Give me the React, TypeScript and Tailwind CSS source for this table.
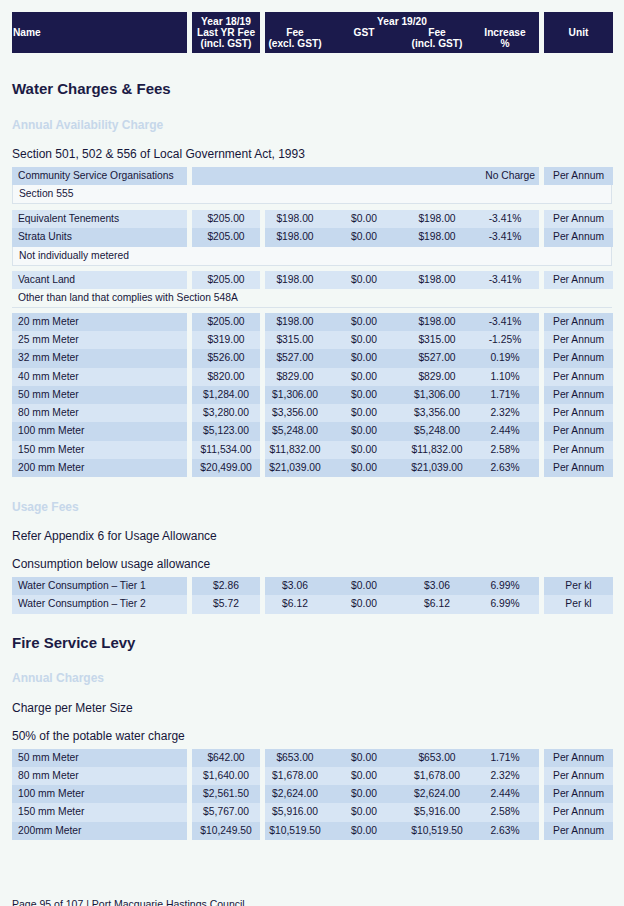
const dark = 'bg-[#c6d9ee]';
const light = 'bg-[#d7e5f4]';

type Fee = {
  name: string;
  last: string;
  fee: string;
  gst: string;
  incl: string;
  inc: string;
  unit: string;
};

const meterRows: Fee[] = [
  { name: '20 mm Meter', last: '$205.00', fee: '$198.00', gst: '$0.00', incl: '$198.00', inc: '-3.41%', unit: 'Per Annum' },
  { name: '25 mm Meter', last: '$319.00', fee: '$315.00', gst: '$0.00', incl: '$315.00', inc: '-1.25%', unit: 'Per Annum' },
  { name: '32 mm Meter', last: '$526.00', fee: '$527.00', gst: '$0.00', incl: '$527.00', inc: '0.19%', unit: 'Per Annum' },
  { name: '40 mm Meter', last: '$820.00', fee: '$829.00', gst: '$0.00', incl: '$829.00', inc: '1.10%', unit: 'Per Annum' },
  { name: '50 mm Meter', last: '$1,284.00', fee: '$1,306.00', gst: '$0.00', incl: '$1,306.00', inc: '1.71%', unit: 'Per Annum' },
  { name: '80 mm Meter', last: '$3,280.00', fee: '$3,356.00', gst: '$0.00', incl: '$3,356.00', inc: '2.32%', unit: 'Per Annum' },
  { name: '100 mm Meter', last: '$5,123.00', fee: '$5,248.00', gst: '$0.00', incl: '$5,248.00', inc: '2.44%', unit: 'Per Annum' },
  { name: '150 mm Meter', last: '$11,534.00', fee: '$11,832.00', gst: '$0.00', incl: '$11,832.00', inc: '2.58%', unit: 'Per Annum' },
  { name: '200 mm Meter', last: '$20,499.00', fee: '$21,039.00', gst: '$0.00', incl: '$21,039.00', inc: '2.63%', unit: 'Per Annum' },
];

const usageRows: Fee[] = [
  { name: 'Water Consumption – Tier 1', last: '$2.86', fee: '$3.06', gst: '$0.00', incl: '$3.06', inc: '6.99%', unit: 'Per kl' },
  { name: 'Water Consumption – Tier 2', last: '$5.72', fee: '$6.12', gst: '$0.00', incl: '$6.12', inc: '6.99%', unit: 'Per kl' },
];

const fireRows: Fee[] = [
  { name: '50 mm Meter', last: '$642.00', fee: '$653.00', gst: '$0.00', incl: '$653.00', inc: '1.71%', unit: 'Per Annum' },
  { name: '80 mm Meter', last: '$1,640.00', fee: '$1,678.00', gst: '$0.00', incl: '$1,678.00', inc: '2.32%', unit: 'Per Annum' },
  { name: '100 mm Meter', last: '$2,561.50', fee: '$2,624.00', gst: '$0.00', incl: '$2,624.00', inc: '2.44%', unit: 'Per Annum' },
  { name: '150 mm Meter', last: '$5,767.00', fee: '$5,916.00', gst: '$0.00', incl: '$5,916.00', inc: '2.58%', unit: 'Per Annum' },
  { name: '200mm Meter', last: '$10,249.50', fee: '$10,519.50', gst: '$0.00', incl: '$10,519.50', inc: '2.63%', unit: 'Per Annum' },
];

const cols = 'grid grid-cols-[175px_68px_274px_69px] gap-x-[5px]';
const sub = 'grid grid-cols-[60px_78px_68px_68px]';

function Row({ row, shade }: { row: Fee; shade: boolean }) {
  const bg = shade ? dark : light;
  return (
    <div className={`${cols} h-[18.25px] items-stretch text-[10.3px] leading-[18.25px]`}>
      <div className={`${bg} pl-[6px]`}>{row.name}</div>
      <div className={`${bg} text-center`}>{row.last}</div>
      <div className={`${bg} ${sub} text-center`}>
        <span>{row.fee}</span>
        <span>{row.gst}</span>
        <span>{row.incl}</span>
        <span>{row.inc}</span>
      </div>
      <div className={`${bg} text-center`}>{row.unit}</div>
    </div>
  );
}

function Note({ text, sides = true }: { text: string; sides?: boolean }) {
  return (
    <div
      className={`h-[19px] pl-[6px] text-[10.3px] leading-[18px] border-b border-[#d9e3eb] ${
        sides ? 'border-x bg-[#f6f9fa]' : ''
      }`}
    >
      {text}
    </div>
  );
}

function Heading({ children }: { children: string }) {
  return <h2 className="text-[15px] leading-[18px] font-bold text-[#1b1b45]">{children}</h2>;
}

function SubHeading({ children }: { children: string }) {
  return <h3 className="text-[12px] leading-[15px] font-bold text-[#c6d7ea]">{children}</h3>;
}

function Line({ children }: { children: string }) {
  return <p className="text-[12px] leading-[15px]">{children}</p>;
}

export default function App() {
  return (
    <div
      className="min-h-[906px] bg-[#f3f8f6] px-[12px] pt-[12px] text-[#16163a]"
      style={{ fontFamily: '"Liberation Sans", Arial, sans-serif' }}
    >
      <div className={`${cols} h-[41px] text-[10.2px] leading-[11.3px] font-bold text-white`}>
        <div className="bg-[#1b1a4c] flex items-center pl-[1px]">Name</div>
        <div className="bg-[#1b1a4c] flex flex-col items-center justify-center">
          <span>Year 18/19</span>
          <span>Last YR Fee</span>
          <span>(incl. GST)</span>
        </div>
        <div className="bg-[#1b1a4c] flex flex-col justify-center">
          <span className="text-center">Year 19/20</span>
          <div className={`${sub} text-center`}>
            <span>
              Fee
              <br />
              (excl. GST)
            </span>
            <span>GST</span>
            <span>
              Fee
              <br />
              (incl. GST)
            </span>
            <span>
              Increase
              <br />%
            </span>
          </div>
        </div>
        <div className="bg-[#1b1a4c] flex items-center justify-center">Unit</div>
      </div>

      <div className="mt-[27px]">
        <Heading>Water Charges &amp; Fees</Heading>
      </div>
      <div className="mt-[20px]">
        <SubHeading>Annual Availability Charge</SubHeading>
      </div>
      <div className="mt-[14px]">
        <Line>Section 501, 502 &amp; 556 of Local Government Act, 1993</Line>
      </div>

      <div className="mt-[5px]">
        <div className={`${cols} h-[18px] text-[10.3px] leading-[18px]`}>
          <div className={`${dark} pl-[6px]`}>Community Service Organisations</div>
          <div className={`${dark} col-span-2 text-right pr-[4px]`}>No Charge</div>
          <div className={`${dark} text-center`}>Per Annum</div>
        </div>
        <Note text="Section 555" />
      </div>

      <div className="mt-[6px]">
        <Row row={{ name: 'Equivalent Tenements', last: '$205.00', fee: '$198.00', gst: '$0.00', incl: '$198.00', inc: '-3.41%', unit: 'Per Annum' }} shade={false} />
        <Row row={{ name: 'Strata Units', last: '$205.00', fee: '$198.00', gst: '$0.00', incl: '$198.00', inc: '-3.41%', unit: 'Per Annum' }} shade />
        <Note text="Not individually metered" />
      </div>

      <div className="mt-[5px]">
        <Row row={{ name: 'Vacant Land', last: '$205.00', fee: '$198.00', gst: '$0.00', incl: '$198.00', inc: '-3.41%', unit: 'Per Annum' }} shade={false} />
        <Note text="Other than land that complies with Section 548A" sides={false} />
      </div>

      <div className="mt-[5px]">
        {meterRows.map((r, i) => (
          <Row key={r.name} row={r} shade={i % 2 === 0} />
        ))}
      </div>

      <div className="mt-[23px]">
        <SubHeading>Usage Fees</SubHeading>
      </div>
      <div className="mt-[14px]">
        <Line>Refer Appendix 6 for Usage Allowance</Line>
      </div>
      <div className="mt-[13px]">
        <Line>Consumption below usage allowance</Line>
      </div>
      <div className="mt-[5px]">
        {usageRows.map((r, i) => (
          <Row key={r.name} row={r} shade={i % 2 === 0} />
        ))}
      </div>

      <div className="mt-[20px]">
        <Heading>Fire Service Levy</Heading>
      </div>
      <div className="mt-[19px]">
        <SubHeading>Annual Charges</SubHeading>
      </div>
      <div className="mt-[15px]">
        <Line>Charge per Meter Size</Line>
      </div>
      <div className="mt-[13px]">
        <Line>50% of the potable water charge</Line>
      </div>
      <div className="mt-[5px]">
        {fireRows.map((r, i) => (
          <Row key={r.name} row={r} shade={i % 2 === 0} />
        ))}
      </div>

      <p className="mt-[57px] text-[10.5px] leading-[15px] pb-[10px]">
        Page 95 of 107 | Port Macquarie Hastings Council
      </p>
    </div>
  );
}
